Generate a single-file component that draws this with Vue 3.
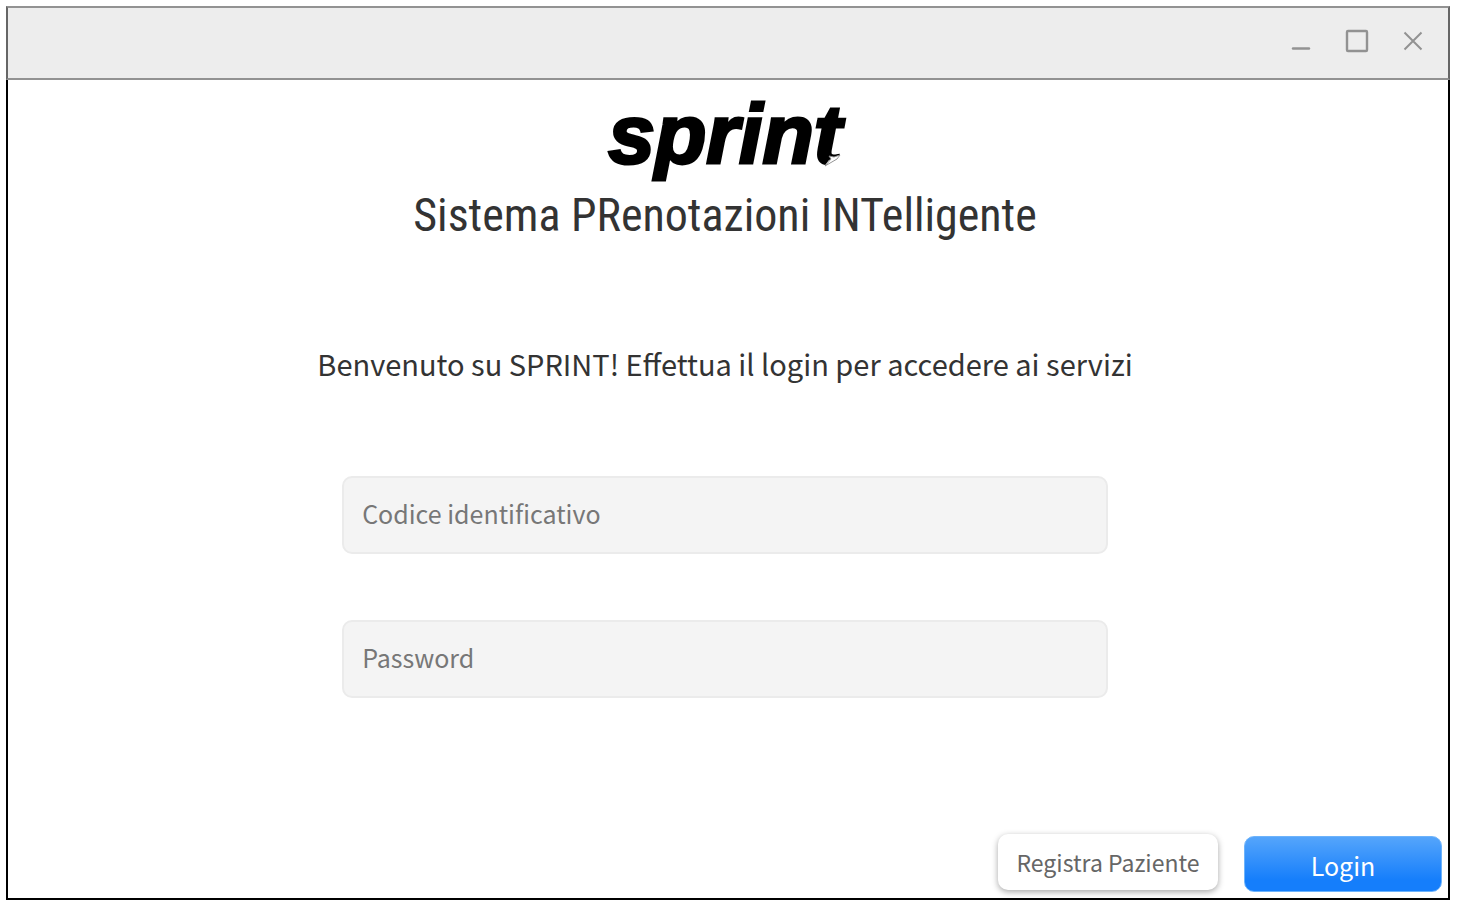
<script setup>
import { ref } from 'vue'

const code = ref('')
const password = ref('')
</script>

<template>
  <div class="desktop">
    <section class="window">
      <header class="titlebar">
        <button class="control" type="button" aria-label="Riduci">
          <svg viewBox="0 0 24 24"><path d="M4 19.5H20" stroke-width="2.4" stroke-linecap="round" /></svg>
        </button>
        <button class="control" type="button" aria-label="Ingrandisci">
          <svg viewBox="0 0 24 24"><rect x="2" y="2" width="20" height="20" rx="1" stroke-width="2.4" /></svg>
        </button>
        <button class="control" type="button" aria-label="Chiudi">
          <svg viewBox="0 0 24 24"><path d="M3.5 3.5L20.5 20.5M20.5 3.5L3.5 20.5" stroke-width="2" /></svg>
        </button>
      </header>

      <form class="content" @submit.prevent>
        <div class="logo">
          sprint
          <svg class="flick" viewBox="0 0 22 16">
            <path d="M1 16L7 8L22 2V16Z" fill="#fff" />
            <path d="M3 14L9 7L7 4L12 5L18 3L15 7Z" fill="#fff" stroke="#888" stroke-width="0.9" />
          </svg>
        </div>
        <h1>Sistema PRenotazioni INTelligente</h1>
        <p class="welcome">Benvenuto su SPRINT! Effettua il login per accedere ai servizi</p>
        <div class="fields">
          <input v-model="code" type="text" placeholder="Codice identificativo" aria-label="Codice identificativo" />
          <input v-model="password" type="password" placeholder="Password" aria-label="Password" />
        </div>
        <footer class="actions">
          <button class="register" type="button">Registra Paziente</button>
          <button class="login" type="submit">Login</button>
        </footer>
      </form>
    </section>
  </div>
</template>

<style>
body {
  margin: 0;
  background: #fff;
}
</style>

<style scoped>
.desktop {
  box-sizing: border-box;
  min-height: 100vh;
  padding: 6px 8px 6px 6px;
  display: flex;
  font-family: "Noto Sans CJK JP", "Noto Sans", sans-serif;
  color: #333;
}
.window {
  flex: 1;
  display: flex;
  flex-direction: column;
  box-sizing: border-box;
  border: 2px solid #000;
  background: #fff;
}
.titlebar {
  display: flex;
  align-items: center;
  justify-content: flex-end;
  gap: 32px;
  box-sizing: border-box;
  height: 74px;
  margin: -2px -2px 0;
  padding: 0 23px 4px;
  border: 2px solid #929292;
  border-left-color: #666;
  border-right-color: #666;
  background: #ededed;
}
.control {
  width: 24px;
  height: 24px;
  padding: 0;
  border: 0;
  background: none;
}
.control svg {
  display: block;
  width: 24px;
  height: 24px;
  fill: none;
  stroke: #929292;
}
.content {
  flex: 1;
  display: flex;
  flex-direction: column;
  align-items: center;
  padding: 16px 6px 6px 0;
}
.logo {
  position: relative;
  font: italic 700 84px/76px "Liberation Sans", sans-serif;
  color: #000;
  -webkit-text-stroke: 3px #000;
}
.flick {
  position: absolute;
  right: -2px;
  bottom: 4px;
  width: 22px;
  height: 16px;
}
h1 {
  margin: 13px 0 0;
  font: 400 46px/60px "Roboto Condensed", Roboto, sans-serif;
}
.welcome {
  margin: 98px 0 93px;
  font-size: 29px;
  line-height: 40px;
}
.fields {
  width: 53.4%;
  display: flex;
  flex-direction: column;
  gap: 66px;
}
input {
  box-sizing: border-box;
  width: 100%;
  height: 78px;
  padding: 0 18px 4px;
  border: 2px solid #ebebeb;
  border-radius: 10px;
  background: #f4f4f4;
  color: #333;
  font-family: inherit;
  font-size: 25px;
}
input::placeholder {
  color: #777;
  opacity: 1;
}
.actions {
  align-self: stretch;
  display: flex;
  justify-content: flex-end;
  align-items: flex-end;
  gap: 26px;
  margin-top: auto;
}
.actions button {
  box-sizing: border-box;
  height: 56px;
  padding: 0 18px;
  border: 0;
  border-radius: 10px;
  font-family: inherit;
}
.actions .register {
  width: 220px;
  margin-bottom: 2px;
  background: #fff;
  box-shadow: 0 2px 6px rgba(0, 0, 0, 0.35);
  color: #666;
  font-size: 23px;
}
.actions .login {
  width: 198px;
  padding-top: 2px;
  border: 1px solid #6db3fb;
  background: linear-gradient(#55a5fb, #157efb 80%);
  color: #fff;
  font-size: 25px;
}
</style>
